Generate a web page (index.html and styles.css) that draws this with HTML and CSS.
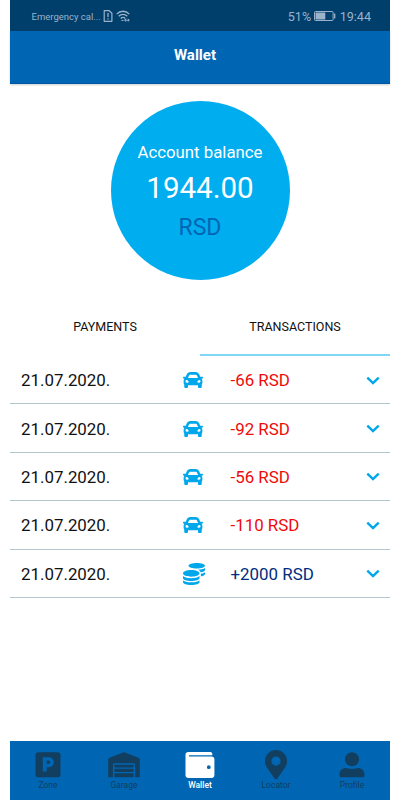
FILE: index.html
```html
<!DOCTYPE html>
<html lang="en">
<head>
    <meta charset="UTF-8">
    <meta name="viewport" content="width=device-width, initial-scale=1.0">
    <title>Wallet</title>
    <link rel="stylesheet" href="styles.css">
</head>
<body>

<!-- Shared icons -->
<svg class="sprite" width="0" height="0">
    <symbol id="car" viewBox="0 64 512 384" preserveAspectRatio="none">
        <path d="M499.99 176h-59.87l-16.64-41.6C406.38 91.63 365.57 64 319.5 64h-127c-46.06 0-86.88 27.63-103.99 70.4L71.87 176H12.01C4.2 176-1.53 183.34.37 190.91l6 24C7.7 220.25 12.5 224 18.01 224h20.07C24.65 235.73 16 252.78 16 272v48c0 16.12 6.16 30.67 16 41.93V416c0 17.67 14.33 32 32 32h32c17.67 0 32-14.33 32-32v-32h256v32c0 17.67 14.33 32 32 32h32c17.67 0 32-14.33 32-32v-54.07c9.84-11.25 16-25.8 16-41.93v-48c0-19.22-8.65-36.27-22.07-48H494c5.51 0 10.31-3.75 11.64-9.09l6-24c1.89-7.57-3.84-14.91-11.65-14.91zm-352.06-17.83c7.29-18.22 24.94-30.17 44.57-30.17h127c19.63 0 37.28 11.95 44.57 30.17L384 208H128l19.93-49.83zM96 319.8c-19.2 0-32-12.76-32-31.9S76.8 256 96 256s48 28.71 48 47.85-28.8 15.95-48 15.95zm320 0c-19.2 0-48 3.19-48-15.95S396.8 256 416 256s32 12.76 32 31.9-12.8 31.9-32 31.9z"/>
    </symbol>
    <symbol id="coins" viewBox="0 0 512 512">
        <path d="M0 405.3V448c0 35.3 86 64 192 64s192-28.7 192-64v-42.7C342.7 434.4 267.2 448 192 448S41.3 434.4 0 405.3zM320 128c106 0 192-28.7 192-64S426 0 320 0 128 28.7 128 64s86 64 192 64zM0 300.4V352c0 35.3 86 64 192 64s192-28.7 192-64v-51.6c-41.3 34-116.9 51.6-192 51.6S41.3 334.4 0 300.4zm416 11c57.3-11.1 96-31.7 96-55.4v-42.7c-23.2 16.4-57.3 27.6-96 34.5v63.6zM192 160C86 160 0 195.8 0 240s86 80 192 80 192-35.8 192-80-86-80-192-80zm219.3 56.3c60-10.8 100.7-32 100.7-56.3v-42.7c-35.5 25.1-96.5 38.6-160.7 41.8 29.5 14.3 51.2 33.5 60 57.2z"/>
    </symbol>
    <symbol id="chevron" viewBox="0 0 14 9">
        <path d="M1.3 1.6L7 7.1l5.7-5.5" fill="none" stroke="currentColor" stroke-width="2.4"/>
    </symbol>
</svg>

<div class="screen">
    <div class="status-bar">
        <span class="carrier">Emergency cal...</span>
        <svg class="sim" width="10" height="12" viewBox="0 0 10 12">
            <path d="M1.2.7h5L8.9 3.2v8.1H1.2z" fill="none" stroke="currentColor" stroke-width="1.2" stroke-linejoin="round"/>
            <path d="M5 3v4M5 8.2v1.3" stroke="currentColor" stroke-width="1.3"/>
        </svg>
        <svg class="wifi" width="14" height="12" viewBox="0 0 14 12">
            <path d="M.7 4.1C4.2.3 9.8.3 13.3 4.1M2.7 6.3c2.5-2.5 6.1-2.5 8.6 0M4.7 8.4c1.4-1.3 3.2-1.3 4.6 0" fill="none" stroke="currentColor" stroke-width="1.3"/>
            <path d="M5.4 10.4h2.2M8.6 10.2h4.7M10.1 8.9L8.7 10.2l1.4 1.3M11.8 8.9l1.4 1.3-1.4 1.3" fill="none" stroke="currentColor" stroke-width="1"/>
        </svg>
        <span class="percent">51%</span>
        <svg class="battery" width="22" height="10" viewBox="0 0 22 10">
            <rect x=".5" y=".5" width="18.6" height="9" rx="1" fill="none" stroke="currentColor"/>
            <rect x="1.5" y="1.5" width="9.8" height="7" fill="currentColor"/>
            <path d="M20.7 2.4v5.2" stroke="currentColor" stroke-width="1.3"/>
        </svg>
        <span class="clock">19:44</span>
    </div>

    <header class="header">
        <h1>Wallet</h1>
    </header>

    <main class="content">
        <div class="balance">
            <span class="balance-label">Account balance</span>
            <span class="balance-value">1944.00</span>
            <span class="balance-currency">RSD</span>
        </div>

        <div class="tabs">
            <div class="tab">PAYMENTS</div>
            <div class="tab active">TRANSACTIONS</div>
        </div>

        <!-- Transaction list -->
        <ul class="transactions">
            <li class="row">
                <span class="date">21.07.2020.</span>
                <svg class="type"><use href="#car"/></svg>
                <span class="amount">-66 RSD</span>
                <svg class="chevron"><use href="#chevron"/></svg>
            </li>
            <li class="row">
                <span class="date">21.07.2020.</span>
                <svg class="type"><use href="#car"/></svg>
                <span class="amount">-92 RSD</span>
                <svg class="chevron"><use href="#chevron"/></svg>
            </li>
            <li class="row">
                <span class="date">21.07.2020.</span>
                <svg class="type"><use href="#car"/></svg>
                <span class="amount">-56 RSD</span>
                <svg class="chevron"><use href="#chevron"/></svg>
            </li>
            <li class="row">
                <span class="date">21.07.2020.</span>
                <svg class="type"><use href="#car"/></svg>
                <span class="amount">-110 RSD</span>
                <svg class="chevron"><use href="#chevron"/></svg>
            </li>
            <li class="row">
                <span class="date">21.07.2020.</span>
                <svg class="type coins"><use href="#coins"/></svg>
                <span class="amount income">+2000 RSD</span>
                <svg class="chevron"><use href="#chevron"/></svg>
            </li>
        </ul>
    </main>

    <!-- Bottom navigation -->
    <nav class="nav">
        <a class="nav-item">
            <svg width="34" height="30" viewBox="0 0 34 30">
                <path fill-rule="evenodd" d="M7.3 2.2h19.4a2.8 2.8 0 0 1 2.8 2.8v19.4a2.8 2.8 0 0 1-2.8 2.8H7.3a2.8 2.8 0 0 1-2.8-2.8V5a2.8 2.8 0 0 1 2.8-2.8zM11.8 7.2v14.3h3.9v-4.2h2.1a5 5 0 0 0 0-10.1zM15.7 10.6h1.8a1.7 1.7 0 0 1 0 3.4h-1.8z"/>
            </svg>
            <span>Zone</span>
        </a>
        <a class="nav-item">
            <svg width="34" height="30" viewBox="0 0 34 30">
                <path d="M1.2 27.2V10c0-1 .5-1.8 1.4-2.2L15.9 2.4a3 3 0 0 1 2.2 0L31.4 7.8c.9.4 1.4 1.2 1.4 2.2v17.2h-4.7V14.8c0-.9-.7-1.5-1.5-1.5H7.4c-.8 0-1.5.6-1.5 1.5v12.4z"/>
                <path d="M7.4 14.7h19.2v2.7H7.4zM7.4 18.7h19.2v3.2H7.4zM7.4 23.3h19.2v3.9H7.4z"/>
            </svg>
            <span>Garage</span>
        </a>
        <a class="nav-item active">
            <svg width="34" height="30" viewBox="0 0 34 30">
                <path fill-rule="evenodd" d="M5.4 2h21.9c1.1 0 2 .9 2 1.9v1.3H6v1.2h22.6c1.5 0 2.8 1.1 2.8 2.6v16.2c0 1.5-1.3 2.7-2.8 2.7H5.4a2.9 2.9 0 0 1-2.9-2.7V4.7A2.8 2.8 0 0 1 5.4 2zM25.8 15.3a1.9 1.9 0 1 0 0 3.8 1.9 1.9 0 0 0 0-3.8z"/>
            </svg>
            <span>Wallet</span>
        </a>
        <a class="nav-item">
            <svg width="34" height="30" viewBox="0 0 34 30">
                <path fill-rule="evenodd" d="M15.8 28.7C7.4 16.8 6 15.7 6 11a11 11 0 0 1 22 0C28 15.7 26.6 16.8 18.2 28.7c-.6.8-1.8.8-2.4 0zM17 6.5a4.6 4.6 0 1 0 0 9.2 4.6 4.6 0 0 0 0-9.2z"/>
            </svg>
            <span>Locator</span>
        </a>
        <a class="nav-item">
            <svg width="34" height="30" viewBox="0 0 34 30">
                <circle cx="17" cy="9.2" r="7"/>
                <path d="M6.3 27.2c-1 0-1.8-.8-1.8-1.8v-1c0-4 3-6.3 6.5-6.3 1.7 0 3 1 6 1s4.3-1 6-1c3.5 0 6.5 2.3 6.5 6.3v1c0 1-.8 1.8-1.8 1.8z"/>
            </svg>
            <span>Profile</span>
        </a>
    </nav>
</div>

</body>
</html>
```
FILE: styles.css
```css
* {
    margin: 0;
    padding: 0;
    box-sizing: border-box;
}
body {
    font-family: Roboto, sans-serif;
    background-color: #fff;
    color: #111;
}
svg {
    display: block;
    flex-shrink: 0;
    fill: currentColor;
}
.sprite {
    position: absolute;
}
.screen {
    display: flex;
    flex-direction: column;
    width: 380px;
    height: 800px;
    margin: 0 auto;
}
.status-bar {
    display: flex;
    align-items: center;
    height: 31px;
    padding: 1px 19px 0 21.5px;
    background-color: #003e6b;
    color: #9ab3ca;
}
.carrier {
    font-size: 9.5px;
    width: 71px;
    white-space: nowrap;
}
.wifi {
    margin-left: 3px;
}
.percent {
    margin-left: auto;
    font-size: 12.6px;
}
.battery {
    margin: 0 3.5px 0 3px;
}
.clock {
    font-size: 12.6px;
}
.header {
    height: 53px;
    padding: 15px 10px 0 0;
    background-color: #0066b3;
    border-bottom: 1px solid #0058a6;
    box-shadow: 0 1px 2px rgba(0, 0, 0, 0.2);
    text-align: center;
}
h1 {
    font-size: 15px;
    line-height: 19px;
    font-weight: bold;
    color: #fff;
}
.content {
    flex: 1;
    padding-top: 17px;
}
.balance {
    display: flex;
    flex-direction: column;
    align-items: center;
    width: 179px;
    height: 179px;
    margin: 0 auto;
    padding-top: 40px;
    border-radius: 50%;
    background-color: #00adef;
    color: #fff;
}
.balance-label {
    font-size: 16.8px;
    line-height: 22px;
}
.balance-value {
    font-size: 29.5px;
    line-height: 36px;
    margin-top: 7px;
}
.balance-currency {
    font-size: 23px;
    line-height: 28px;
    margin-top: 8px;
    color: #0066b3;
}
.tabs {
    display: flex;
    margin-top: 18px;
}
.tab {
    flex: 1;
    height: 58px;
    border-bottom: 2px solid transparent;
    font-size: 12.5px;
    line-height: 58px;
    text-align: center;
}
.tab.active {
    border-color: #80d6f7;
}
.transactions {
    list-style: none;
}
.row {
    display: flex;
    align-items: center;
    height: 48.4px;
    padding: 1px 10.5px 0 11px;
    border-bottom: 1px solid #b4c7cf;
    font-size: 16.9px;
}
.date {
    width: 162px;
}
.type {
    width: 20px;
    height: 16px;
    color: #00a7ea;
}
.coins {
    width: 22px;
    height: 22px;
}
.amount {
    width: 135px;
    margin-left: 27.5px;
    color: #f00a0a;
}
.coins + .amount {
    margin-left: 25.5px;
}
.amount.income {
    color: #002d80;
}
.chevron {
    width: 14px;
    height: 9px;
    color: #00a7ea;
}
.nav {
    display: flex;
    height: 59px;
    padding-top: 9px;
    background-color: #0066b3;
}
.nav-item {
    display: flex;
    flex: 1;
    flex-direction: column;
    align-items: center;
    font-size: 8.5px;
    line-height: 10px;
    color: #123f60;
}
.nav-item.active {
    font-weight: 500;
    color: #fff;
}
```
